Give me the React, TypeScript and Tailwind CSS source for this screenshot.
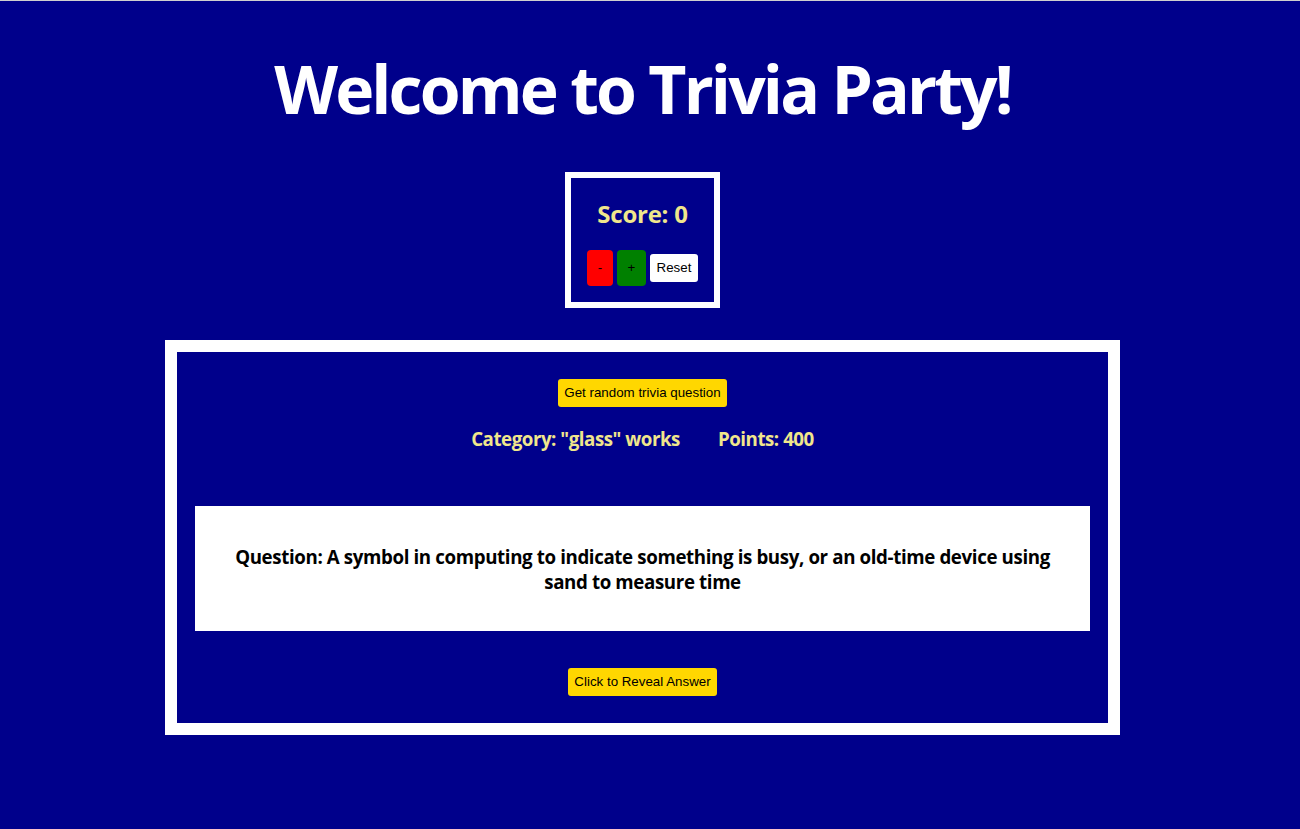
import React, { useState } from "react";

const question = {
  category: '"glass" works',
  points: 400,
  text: "A symbol in computing to indicate something is busy, or an old-time device using sand to measure time",
  answer: "an hourglass",
};

export default function App() {
  const [score, setScore] = useState(0);
  const [revealed, setRevealed] = useState(false);

  return (
    <main className="min-h-screen bg-[#00008b] border-t border-[#cfcfcf] pr-[15px] flex flex-col items-center font-['Open_Sans','Noto_Sans',sans-serif]">
      {/* title */}
      <h1 className="mt-[43px] text-[66px] leading-[88px] font-bold tracking-[-0.043em] text-white">Welcome to Trivia Party!</h1>

      {/* score box */}
      <div className="mt-[40px] w-[155px] h-[136px] border-[6px] border-white flex flex-col items-center">
        <h2 className="mt-[20px] text-[24px] leading-[32px] font-bold tracking-[-0.01em] text-[#f0e68c]">Score: {score}</h2>
        <div className="mt-[20px] flex items-center gap-[4px] font-['Liberation_Sans',Arial,sans-serif] text-[13.33px] text-black">
          <button
            className="w-[26px] h-[36px] rounded-[4px] bg-[#ff0000] flex items-center justify-center"
            onClick={() => setScore(score - question.points)}
          >
            -
          </button>
          <button
            className="w-[29px] h-[36px] rounded-[4px] bg-[#008000] flex items-center justify-center"
            onClick={() => setScore(score + question.points)}
          >
            +
          </button>
          <button
            className="w-[48px] h-[28px] rounded-[3px] bg-white flex items-center justify-center"
            onClick={() => setScore(0)}
          >
            Reset
          </button>
        </div>
      </div>

      {/* question card */}
      <div className="mt-[32px] w-[955px] border-[12px] border-white flex flex-col items-center pb-[27px]">
        <button className="mt-[27px] h-[28px] px-[6px] rounded-[3px] bg-[#ffd700] text-black font-['Liberation_Sans',Arial,sans-serif] text-[13.33px]">
          Get random trivia question
        </button>

        <div className="mt-[19px] flex items-center gap-[38px] text-[18.72px] leading-[25px] font-bold tracking-[-0.025em] text-[#f0e68c]">
          <h3>Category: {question.category}</h3>
          <h3>Points: {question.points}</h3>
        </div>

        <div className="mt-[55px] self-stretch mx-[18px] h-[125px] bg-white flex items-center justify-center px-[30px]">
          <h3 className="text-center text-[18.72px] leading-[25px] font-bold tracking-[-0.02em] text-black">
            Question: {question.text}
          </h3>
        </div>

        {revealed && (
          <h3 className="mt-[20px] text-[18.72px] leading-[25px] font-bold text-[#f0e68c]">Answer: {question.answer}</h3>
        )}

        <button
          className="mt-[37px] h-[28px] px-[6px] rounded-[3px] bg-[#ffd700] text-black font-['Liberation_Sans',Arial,sans-serif] text-[13.33px]"
          onClick={() => setRevealed(!revealed)}
        >
          Click to Reveal Answer
        </button>
      </div>
    </main>
  );
}
